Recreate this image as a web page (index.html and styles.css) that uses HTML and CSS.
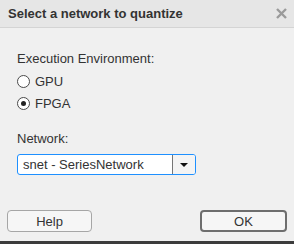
FILE: index.html
```html
<!DOCTYPE html>
<html lang="en">
<head>
  <meta charset="UTF-8" />
  <title>Select a network to quantize</title>
  <link rel="stylesheet" href="styles.css">
</head>
<body>
  <div class="dialog">
    <!-- Title bar -->
    <div class="titlebar">
      <span class="title">Select a network to quantize</span>
      <svg class="close" width="11" height="11" viewBox="0 0 11 11">
        <path d="M1 1 L10 10 M10 1 L1 10" stroke="#9a9a9a" stroke-width="2.4" fill="none"/>
      </svg>
    </div>

    <!-- Content -->
    <div class="content">
      <p class="label">Execution Environment:</p>
      <label class="radio"><span class="dot"></span>GPU</label>
      <label class="radio"><span class="dot checked"></span>FPGA</label>

      <p class="label network">Network:</p>
      <div class="select">
        <span class="value">snet - SeriesNetwork</span>
        <span class="arrow"><span class="tri"></span></span>
      </div>
    </div>

    <!-- Buttons -->
    <div class="footer">
      <button class="btn">Help</button>
      <button class="btn ok">OK</button>
    </div>
  </div>
</body>
</html>
```

FILE: styles.css
```css
body { margin: 0; font-family: "Liberation Sans", Arial, sans-serif; color: #333; }
.dialog { width: 294px; height: 244px; background: #f0f0f0; display: flex; flex-direction: column; box-sizing: border-box; border-bottom: 3px solid #3c3c3c; }
.titlebar { height: 27px; background: #e6e6e6; border-bottom: 1px solid #d4d4d4; display: flex; align-items: center; justify-content: space-between; padding: 0 7px 0 8px; }
.title { font-weight: bold; font-size: 13px; color: #333; margin-top: 0; }
.close { margin-top: 0; }
.content { padding: 0 17px; }
.label { margin: 23px 0 4px; font-size: 13px; line-height: 15px; }
.label.network { margin: 17px 0 8px; }
.radio { display: flex; align-items: center; height: 22px; font-size: 13px; }
.dot { width: 11px; height: 11px; border: 1px solid #4a4a4a; border-radius: 50%; background: #fff; margin-right: 5px; display: flex; align-items: center; justify-content: center; }
.dot.checked::after { content: ""; width: 5px; height: 5px; border-radius: 50%; background: #222; }
.select { width: 179px; height: 21px; box-sizing: border-box; border: 1px solid #1e90ff; border-radius: 3px; background: #fff; display: flex; font-size: 13px; }
.value { flex: 1; padding-left: 5px; line-height: 19px; }
.arrow { width: 22px; border-left: 1px solid #767676; background: #f4f4f4; border-radius: 0 2px 2px 0; display: flex; align-items: center; justify-content: center; }
.tri { width: 0; height: 0; border-left: 4px solid transparent; border-right: 4px solid transparent; border-top: 4px solid #111; }
.footer { margin-top: auto; padding: 0 7px 9px; display: flex; justify-content: space-between; }
.btn { width: 85px; height: 22px; font-family: "Liberation Sans", Arial, sans-serif; font-size: 13px; color: #333; background: #f6f6f6; border: 1px solid #a6a6a6; border-radius: 4px; padding: 0; }
.ok { width: 87px; border: 2px solid #6e6e6e; }
```
